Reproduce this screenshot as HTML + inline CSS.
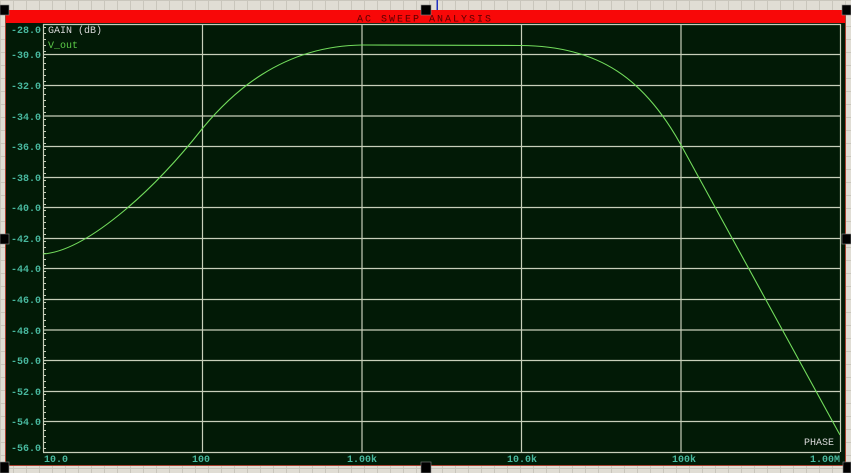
<!DOCTYPE html>
<html><head><meta charset="utf-8"><style>
html,body{margin:0;padding:0;background:#dedbd2;}
svg{display:block}
text{font-family:"Liberation Mono","DejaVu Sans Mono",monospace;font-size:10px}
</style></head><body>
<svg width="851" height="473" viewBox="0 0 851 473" xmlns="http://www.w3.org/2000/svg">
<defs>
<pattern id="bg" width="13" height="13" patternUnits="userSpaceOnUse">
<rect width="13" height="13" fill="#e0ddd4"/>
<path d="M0 0.5H13M0.5 0V13" stroke="#c9c6bc" stroke-width="1"/>
</pattern>
</defs>
<rect width="851" height="473" fill="url(#bg)"/>
<rect x="5" y="10" width="841" height="456" fill="#a84030"/>
<rect x="6" y="10" width="839" height="13" fill="#f80808"/>
<text x="425" y="21.5" text-anchor="middle" fill="#5a0000" font-size="12.5" letter-spacing="2">AC SWEEP ANALYSIS</text>
<rect x="6" y="23" width="839" height="442" fill="#021a06"/>
<g stroke="#c8cfba" stroke-width="1.2" fill="none">
<path d="M43 24.5H840.5"/>
<path d="M43 54.5H840M43 85.5H840M43 116H840M43 146.5H840M43 177.5H840M43 207.5H840M43 238.5H840M43 268.5H840M43 299.5H840M43 330H840M43 360.5H840M43 391.5H840M43 421.5H840M43 452.5H840"/>
<path d="M202.5 24V452M362 24V452M521.5 24V452M681 24V452M840.5 24V452M43.5 24V452"/>
</g>
<g stroke="#c8cfba" stroke-width="1">
<path d="M43 27.5h3M43 33.5h3M43 39.5h3M43 45.5h3M43 51.5h3M43 57.5h3M43 63.5h3M43 69.5h3M43 75.5h3M43 81.5h3M43 88.5h3M43 94.5h3M43 100.5h3M43 106.5h3M43 112.5h3M43 119.5h3M43 125.5h3M43 131.5h3M43 137.5h3M43 143.5h3M43 149.5h3M43 155.5h3M43 161.5h3M43 167.5h3M43 173.5h3M43 180.5h3M43 186.5h3M43 192.5h3M43 198.5h3M43 204.5h3M43 210.5h3M43 216.5h3M43 222.5h3M43 228.5h3M43 234.5h3M43 241.5h3M43 247.5h3M43 253.5h3M43 259.5h3M43 265.5h3M43 271.5h3M43 277.5h3M43 283.5h3M43 289.5h3M43 295.5h3M43 302.5h3M43 308.5h3M43 314.5h3M43 320.5h3M43 326.5h3M43 333.5h3M43 339.5h3M43 345.5h3M43 351.5h3M43 357.5h3M43 363.5h3M43 369.5h3M43 375.5h3M43 381.5h3M43 387.5h3M43 394.5h3M43 400.5h3M43 406.5h3M43 412.5h3M43 418.5h3M43 424.5h3M43 430.5h3M43 436.5h3M43 442.5h3M43 448.5h3"/>
</g>
<g fill="#48b89e" text-anchor="end" font-weight="bold">
<text x="41" y="33">-28.0</text><text x="41" y="58">-30.0</text><text x="41" y="89">-32.0</text>
<text x="41" y="120">-34.0</text><text x="41" y="150">-36.0</text><text x="41" y="181">-38.0</text>
<text x="41" y="211">-40.0</text><text x="41" y="242">-42.0</text><text x="41" y="272">-44.0</text>
<text x="41" y="303">-46.0</text><text x="41" y="334">-48.0</text><text x="41" y="364">-50.0</text>
<text x="41" y="395">-52.0</text><text x="41" y="425">-54.0</text><text x="41" y="451">-56.0</text>
</g>
<g fill="#48b89e" font-weight="bold">
<text x="44" y="462">10.0</text>
<text x="210" y="462" text-anchor="end">100</text>
<text x="377" y="462" text-anchor="end">1.00k</text>
<text x="537" y="462" text-anchor="end">10.0k</text>
<text x="696" y="462" text-anchor="end">100k</text>
<text x="840" y="462" text-anchor="end">1.00M</text>
</g>
<text x="48" y="33" fill="#d8d8d8">GAIN (dB)</text>
<text x="48" y="48" fill="#5ccc48">V_out</text>
<text x="834" y="445" fill="#d8d8d8" text-anchor="end">PHASE</text>
<path d="M43 254 C85 251 150 195 202 129 C230 95 280 46 362 45 L521 45.5 C600 46 645 80 681 145 C720 215 780 325 840 435" stroke="#72dc5c" stroke-width="1.1" fill="none"/>
<rect x="436.5" y="0" width="1.5" height="10" fill="#2030c0"/>
<g fill="#000" stroke="#888" stroke-width="0.6">
<rect x="0" y="5" width="9" height="10"/><rect x="421" y="5" width="10" height="10"/><rect x="842" y="5" width="9" height="10"/>
<rect x="0" y="234" width="9" height="10"/><rect x="842" y="234" width="9" height="10"/>
<rect x="0" y="462" width="9" height="11"/><rect x="421" y="462" width="10" height="11"/><rect x="843" y="462" width="8" height="11"/>
</g>
</svg>
</body></html>
